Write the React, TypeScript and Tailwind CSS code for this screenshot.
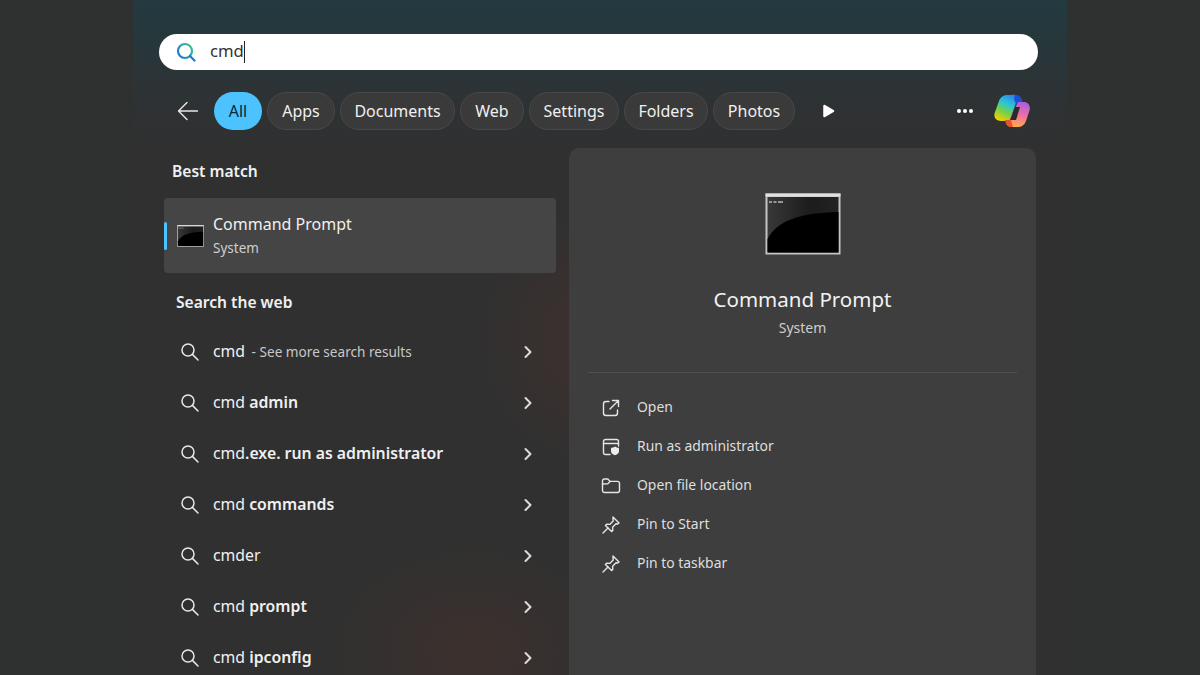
import React from "react";

const font = "font-['Noto_Sans','Open_Sans',sans-serif]";

const chips = [
  ["Apps", "w-[68px]"],
  ["Documents", "w-[115px]"],
  ["Web", "w-[64px]"],
  ["Settings", "w-[90px]"],
  ["Folders", "w-[84px]"],
  ["Photos", "w-[82px]"],
];

const web: [string, string, boolean][] = [
  ["cmd", " admin", true],
  ["cmd", ".exe. run as administrator", true],
  ["cmd", " commands", true],
  ["cmd", "er", false],
  ["cmd", " prompt", true],
  ["cmd", " ipconfig", true],
];

function Magnifier() {
  return (
    <svg width="20" height="20" viewBox="0 0 20 20" fill="none" stroke="#e8e8e8" strokeWidth="1.5" strokeLinecap="round">
      <circle cx="8" cy="8" r="6" />
      <path d="M12.4 12.4 18 18" />
    </svg>
  );
}

function Chevron() {
  return (
    <svg width="10" height="14" viewBox="0 0 10 14" fill="none" stroke="#dcdcdc" strokeWidth="2" strokeLinecap="round" strokeLinejoin="round">
      <path d="M2.5 2 7.5 7l-5 5" />
    </svg>
  );
}

function WebRow({ children }: { children: React.ReactNode }) {
  return (
    <div className="flex h-[51px] items-center pl-[16px] pr-[23px]">
      <Magnifier />
      <div className="ml-[13px] flex-1 whitespace-nowrap text-[15.800px] text-[#f0f0f0]">{children}</div>
      <Chevron />
    </div>
  );
}

function CmdIcon({ small }: { small?: boolean }) {
  return (
    <svg viewBox="0 0 76 62" className={small ? "h-[22px] w-[27px]" : "h-[62px] w-[76px]"}>
      <defs>
        <linearGradient id={small ? "cs" : "cb"} x1="0" y1="0" x2="1" y2="0">
          <stop offset="0" stopColor="#383838" />
          <stop offset="0.6" stopColor="#1c1c1c" />
          <stop offset="1" stopColor="#222" />
        </linearGradient>
      </defs>
      <rect x="0.5" y="0.5" width="75" height="61" fill="#c4c4c4" />
      <rect x="0.5" y="0.5" width="75" height="3" fill="#e0e0e0" />
      <rect x="2.500" y="4" width="71" height="55.500" fill={`url(#${small ? "cs" : "cb"})`} />
      <path d="M2.500 46C12 28 34 20 73.500 19V59.500H2.500Z" fill="#000" />
      <path d="M4 9h3M8.500 9h3M13 9h5" stroke="#b8b8b8" strokeWidth="1.600" />
    </svg>
  );
}

function ActionIcon({ kind }: { kind: string }) {
  const common = { width: 20, height: 20, viewBox: "0 0 20 20", fill: "none", stroke: "#e6e6e6", strokeWidth: 1.4, strokeLinecap: "round" as const, strokeLinejoin: "round" as const };
  if (kind === "open")
    return (
      <svg {...common}>
        <path d="M8 3.500H5A2.500 2.500 0 0 0 2.500 6v9A2.500 2.500 0 0 0 5 17.500h9a2.500 2.500 0 0 0 2.500-2.500v-3" />
        <path d="M11.500 2.500h6v6M17.500 2.500 9 11" />
      </svg>
    );
  if (kind === "admin")
    return (
      <svg {...common}>
        <path d="M9 17.500H4.500a2 2 0 0 1-2-2v-11a2 2 0 0 1 2-2h11a2 2 0 0 1 2 2V9" />
        <path d="M2.500 6.500h15" />
        <path d="M14 9.500c1.200 1 2.500 1.200 4 1.200v3.600c0 2-1.600 3.200-4 4-2.400-.8-4-2-4-4v-3.600c1.500 0 2.800-.2 4-1.200Z" fill="#ececec" stroke="none" />
      </svg>
    );
  if (kind === "folder")
    return (
      <svg {...common}>
        <path d="M1.500 5a2 2 0 0 1 2-2h3.300l2.400 2.400h7.300a2 2 0 0 1 2 2v7.100a2 2 0 0 1-2 2h-13a2 2 0 0 1-2-2Z" />
        <path d="M1.500 8 6.500 7.900 9.200 5.400" />
      </svg>
    );
  return (
    <svg {...common}>
      <path d="M12 2 18 8l-1.200 1-1.800-.2-3.400 3.400.2 3.200-1.200 1.200L4.400 10.400l1.200-1.200 3.200.2L12.200 6 12 4.200Z" />
      <path d="M7 13 2 18" />
    </svg>
  );
}

function Copilot() {
  return (
    <svg width="38" height="36" viewBox="0 0 38 36">
      <defs>
        <linearGradient id="cpA" x1="0.7" y1="0" x2="0.2" y2="1">
          <stop offset="0" stopColor="#2f7df0" />
          <stop offset="0.35" stopColor="#27c5d8" />
          <stop offset="0.65" stopColor="#76d04a" />
          <stop offset="1" stopColor="#f5d000" />
        </linearGradient>
        <linearGradient id="cpB" x1="0.6" y1="0" x2="0.4" y2="1">
          <stop offset="0" stopColor="#a95fe0" />
          <stop offset="0.5" stopColor="#ee6fa0" />
          <stop offset="1" stopColor="#ffae4a" />
        </linearGradient>
      </defs>
      <path d="M18 2c4-1 7 0 8.500 3.500L28 10l-5 0-5 14c-1 3-3 4-5 4H8c-5 0-8-4-6-9L6 8c1.500-4 5-6 8-6Z" fill="url(#cpA)" />
      <path d="M22 2c3-.5 5 .5 6.500 3.500L30 10l-7 1-2-5Z" fill="#1e4fd0" />
      <path d="M25 9h6c4 0 7 4 5.500 8.500L33 28c-1.500 4-4.500 6-8 6h-6c-3 0-5-1.500-6-4l3-3Z" fill="url(#cpB)" />
      <path d="M12 27h6l2 7h-3c-2 0-4-2-5-7Z" fill="#e8522e" />
      <path d="M22 14h5l-4 13h-6Z" fill="#2a2a2a" />
    </svg>
  );
}

export default function App() {
  return (
    <div className={`${font} relative h-[675px] w-[1200px] overflow-hidden bg-[#2f3030]`}>
      <div className="absolute left-[133px] top-0 h-[675px] w-[934px] bg-[radial-gradient(ellipse_110px_130px_at_450px_340px,rgba(110,50,45,0.22),transparent),radial-gradient(ellipse_150px_110px_at_340px_650px,rgba(110,50,40,0.2),transparent),linear-gradient(180deg,#233a40_0px,#28363a_50px,#2e3234_100px,#303030_150px,#303030_675px)]">
        <div className="flex h-full flex-col">
          <div className="ml-[26px] mt-[34px] flex h-[36px] w-[879px] shrink-0 items-center rounded-[18px] bg-white pl-[17px]">
            <svg width="20" height="20" viewBox="0 0 20 20" fill="none" strokeWidth="2.200" strokeLinecap="round">
              <defs>
                <linearGradient id="sg" x1="0" y1="0.8" x2="1" y2="0">
                  <stop offset="0" stopColor="#1a78d6" />
                  <stop offset="1" stopColor="#3fc88a" />
                </linearGradient>
              </defs>
              <circle cx="9" cy="9" r="7" stroke="url(#sg)" />
              <path d="M14 14l4.500 4.500" stroke="#1a78d6" />
            </svg>
            <span className="ml-[14px] pb-[2px] text-[16.700px] leading-none text-[#333]">cmd</span>
            <span className="h-[22px] w-[1.500px] bg-[#222]" />
          </div>

          <div className="mt-[22px] flex h-[38px] shrink-0 items-center pl-[44px]">
            <svg width="22" height="20" viewBox="0 0 22 20" fill="none" stroke="#e8e8e8" strokeWidth="1.400" strokeLinecap="round" strokeLinejoin="round">
              <path d="M1.500 10h19M10 1.500 1.500 10l8.500 8.500" />
            </svg>
            <div className="ml-[15px] flex h-[38px] w-[48px] items-center justify-center rounded-[20px] bg-[#4cc2ff] text-[16px] text-[#06263a]">All</div>
            <div className="ml-[5px] flex gap-[5px]">
              {chips.map(([t, w]) => (
                <div key={t} className={`${w} flex h-[38px] items-center justify-center rounded-[20px] border border-[#484848] bg-[#3a3a3a] text-[16px] text-[#f0f0f0]`}>
                  {t}
                </div>
              ))}
            </div>
            <svg className="ml-[27px]" width="13" height="14" viewBox="0 0 13 14">
              <path d="M2.500 2 11 7l-8.500 5Z" fill="#fff" stroke="#fff" strokeWidth="2.500" strokeLinejoin="round" />
            </svg>
            <div className="ml-[122px] flex gap-[2px]">
              <span className="h-[4px] w-[4px] rounded-full bg-white" />
              <span className="h-[4px] w-[4px] rounded-full bg-white" />
              <span className="h-[4px] w-[4px] rounded-full bg-white" />
            </div>
            <div className="ml-[20px]">
              <Copilot />
            </div>
          </div>

          <div className="mt-[18px] flex min-h-0 flex-1 items-start">
            <div className="ml-[31px] w-[392px]">
              <div className="ml-[8px] mt-[12px] h-[23px] text-[15.600px] font-semibold leading-[23px] text-[#f0f0f0]">Best match</div>
              <div className="relative mt-[15px] flex h-[75px] items-center rounded-[4px] bg-[#454545] pl-[13px]">
                <span className="absolute left-0 top-[24px] h-[28px] w-[3px] rounded-full bg-[#4cc2ff]" />
                <CmdIcon small />
                <div className="ml-[9px]">
                  <div className="text-[16px] leading-[24px] text-[#f0f0f0]">Command Prompt</div>
                  <div className="mt-[2px] text-[13.500px] leading-[21px] text-[#cfcfcf]">System</div>
                </div>
              </div>
              <div className="ml-[12px] mt-[18px] h-[23px] text-[15.600px] font-semibold leading-[23px] text-[#f0f0f0]">Search the web</div>
              <div className="mt-[12px]">
                <WebRow>
                  cmd<span className="ml-[3px] text-[13.600px] text-[#c8c8c8]"> - See more search results</span>
                </WebRow>
                {web.map(([a, b, bold]) => (
                  <WebRow key={b}>
                    {a}
                    <span className={bold ? "font-semibold" : ""}>{b}</span>
                  </WebRow>
                ))}
              </div>
            </div>

            <div className="ml-[13px] h-[540px] w-[467px] rounded-t-[10px] bg-[#3e3e3e]">
              <div className="mt-[45px] flex justify-center">
                <CmdIcon />
              </div>
              <div className="mt-[29px] text-center text-[20.500px] leading-[30px] text-[#f2f2f2]">Command Prompt</div>
              <div className="mt-[4px] text-center text-[14px] leading-[20px] text-[#cdcdcd]">System</div>
              <div className="mx-[19px] mt-[34px] h-px bg-[#505050]" />
              <div className="ml-[32px] mt-[15px] flex flex-col">
                {[
                  ["open", "Open"],
                  ["admin", "Run as administrator"],
                  ["folder", "Open file location"],
                  ["pin", "Pin to Start"],
                  ["pin", "Pin to taskbar"],
                ].map(([k, t]) => (
                  <div key={t} className="flex h-[39px] items-center">
                    <ActionIcon kind={k} />
                    <span className="ml-[16px] text-[13.900px] text-[#dedede]">{t}</span>
                  </div>
                ))}
              </div>
            </div>
          </div>
        </div>
      </div>
    </div>
  );
}
